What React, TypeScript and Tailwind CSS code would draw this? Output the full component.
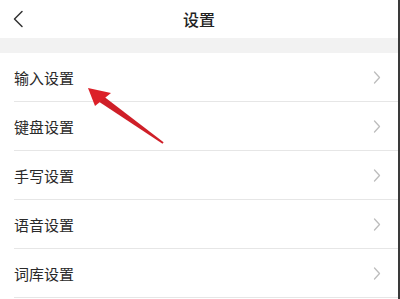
import React from "react";

const items = ["输入设置", "键盘设置", "手写设置", "语音设置", "词库设置"];

export default function App() {
  return (
    <div
      className="relative w-[400px] h-[299px] overflow-hidden bg-white border-r-2 border-[#3a3a3a]"
      style={{ fontFamily: '"Noto Sans CJK SC", "Noto Sans", sans-serif' }}
    >
      <div className="h-[38px] grid grid-cols-[1fr_auto_1fr] items-center">
        <div className="pl-[13px] flex items-center">
          <svg width="11" height="18" viewBox="0 0 11 18" fill="none">
            <path d="M9 1.5 L1.5 9 L9 16.5" stroke="#333" strokeWidth="1.5" strokeLinecap="round" strokeLinejoin="round" />
          </svg>
        </div>
        <div className="text-[16px] font-medium text-[#222] leading-none">设置</div>
        <div />
      </div>
      <div className="h-[15px] bg-[#f2f2f2]" />
      <div>
        {items.map((t) => (
          <div
            key={t}
            className="h-[49px] ml-[14px] border-b border-[#e6e6e6] flex items-center justify-between pr-[17px]"
          >
            <span className="text-[15px] text-[#2a2a2a] leading-none">{t}</span>
            <svg width="8" height="13" viewBox="0 0 8 13" fill="none">
              <path d="M1.5 1 L6.5 6.5 L1.5 12" stroke="#bdbdbd" strokeWidth="1.3" strokeLinecap="round" strokeLinejoin="round" />
            </svg>
          </div>
        ))}
      </div>
      <svg className="absolute left-0 top-0" width="400" height="299" viewBox="0 0 400 299">
        <path d="M99 101.8 L103.2 96 L163.6 142.3 L162.5 143.8 Z" fill="#cf1f28" />
        <path d="M88 88 L111 93 L95 106 Z" fill="#dc2028" />
      </svg>
    </div>
  );
}
